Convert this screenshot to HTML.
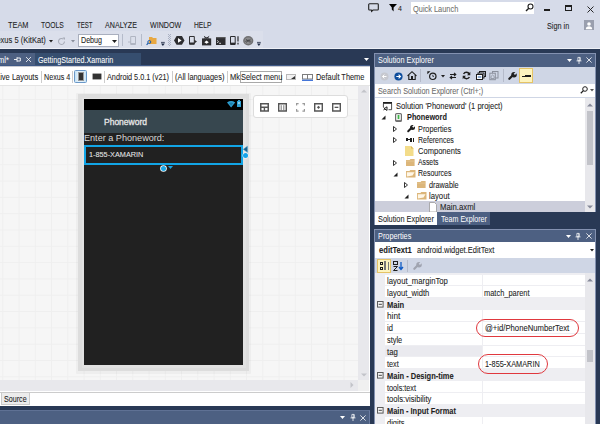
<!DOCTYPE html>
<html><head><meta charset="utf-8">
<style>
*{margin:0;padding:0;box-sizing:border-box}
html,body{width:600px;height:424px;overflow:hidden;background:#D6DBE9;position:relative;font-family:"Liberation Sans",sans-serif;color:#1E1E1E}
.a{position:absolute}
.t{position:absolute;white-space:nowrap;line-height:1;font-size:8.6px;transform:scaleX(.875);transform-origin:0 0;-webkit-text-stroke:.08px currentColor}
.b{font-weight:bold}
svg{position:absolute;overflow:visible}
</style></head><body>

<!-- ===== MENU BAR ===== -->
<div class="t" style="left:8.2px;top:20.65px;font-size:8.8px;transform:scaleX(0.840)">TEAM</div>
<div class="t" style="left:41px;top:20.65px;font-size:8.8px;transform:scaleX(0.769)">TOOLS</div>
<div class="t" style="left:76.6px;top:20.65px;font-size:8.8px;transform:scaleX(0.688)">TEST</div>
<div class="t" style="left:105.2px;top:20.65px;font-size:8.8px;transform:scaleX(0.809)">ANALYZE</div>
<div class="t" style="left:149.6px;top:20.65px;font-size:8.8px;transform:scaleX(0.811)">WINDOW</div>
<div class="t" style="left:194.2px;top:20.65px;font-size:8.8px;transform:scaleX(0.761)">HELP</div>

<!-- top-right -->
<svg style="left:368px;top:3px" width="11" height="9" viewBox="0 0 11 9"><path d="M1.5 .8h8a.8.8 0 0 1 .8.8v4.6a.8.8 0 0 1-.8.8H5L3.6 8.4 3.3 7H1.5a.8.8 0 0 1-.8-.8V1.6a.8.8 0 0 1 .8-.8z" fill="none" stroke="#1E1E1E" stroke-width="1.1"/></svg>
<svg style="left:389px;top:4px" width="8" height="8" viewBox="0 0 8 8"><path d="M0 0H8L4.6 3.6V7.6L2.8 5.6V3.6z" fill="#000"/></svg>
<div class="t" style="left:398px;top:5px;font-size:7px;color:#1E1E1E;transform:none">4</div>
<div class="a" style="left:411px;top:2px;width:123px;height:12px;background:#fff"></div>
<div class="t" style="left:412.96px;top:4.58px;color:#717171;transform:scaleX(0.862)">Quick Launch</div>
<svg style="left:525px;top:3px" width="9" height="9" viewBox="0 0 9 9"><circle cx="5.5" cy="3.5" r="2.5" fill="none" stroke="#1E1E1E" stroke-width="1.1"/><path d="M3.8 5.2L1 8" stroke="#1E1E1E" stroke-width="1.4"/></svg>
<div class="a" style="left:544px;top:9px;width:6px;height:2px;background:#1E1E1E"></div>
<div class="a" style="left:565px;top:5px;width:7px;height:6px;border:1px solid #1E1E1E;border-top-width:2px"></div>
<svg style="left:587px;top:6px" width="7" height="7" viewBox="0 0 7 7"><path d="M.5 .5l6 6M6.5 .5l-6 6" stroke="#1E1E1E" stroke-width=".95"/></svg>
<div class="t" style="left:546.96px;top:21.78px;color:#1E1E1E;transform:scaleX(0.846)">Sign in</div>
<div class="a" style="left:584px;top:20px;width:10px;height:10px;background:#9A9FAE"></div>
<svg style="left:584px;top:20px" width="10" height="10" viewBox="0 0 10 10"><circle cx="5" cy="4" r="1.8" fill="#fff"/><path d="M1.8 9.2c0-2.2 1.4-3 3.2-3s3.2.8 3.2 3z" fill="#fff"/></svg>

<!-- ===== TOOLBAR ===== -->
<div class="a" style="left:0;top:31px;width:262.5px;height:17px;background:rgba(255,255,255,.13)"></div>
<div class="t" style="left:-9.3px;top:36.18px;">Nexus 5 (KitKat)</div>
<svg style="left:49px;top:40.2px" width="4" height="2.5" viewBox="0 0 4 2.5"><path d="M0 0h4L2 2.5z" fill="#1E1E1E"/></svg>
<svg style="left:57px;top:36.5px" width="9" height="9" viewBox="0 0 9 9"><path d="M7.5 4.5a3 3 0 1 1-1-2.3" fill="none" stroke="#A8ACB8" stroke-width="1.1"/><path d="M5.5 .5h2.5v2.5z" fill="#A8ACB8"/></svg>
<svg style="left:71px;top:40px" width="4" height="3" viewBox="0 0 4 3"><path d="M0 0h4L2 2.5z" fill="#8A8F9C"/></svg>
<div class="a" style="left:78px;top:34px;width:41px;height:13px;background:#fff;border:1px solid #A9AFBE"></div>
<div class="t" style="left:80.72px;top:36.18px;;transform:scaleX(0.830)">Debug</div>
<svg style="left:112px;top:40px" width="5" height="3" viewBox="0 0 5 3"><path d="M0 0h5L2.5 3z" fill="#1E1E1E"/></svg>
<div class="a" style="left:122px;top:34px;width:1px;height:12px;background:#B5BBCA"></div>
<svg style="left:128.2px;top:36px" width="8" height="9" viewBox="0 0 8 9"><path d="M2.7 .5h4.8v8H2.7z" fill="none" stroke="#B0B5C2" stroke-width="1"/><path d="M2.7 7.6h4.8" stroke="#B0B5C2" stroke-width="1.2"/><path d="M0 6h2.7" stroke="#B0B5C2" stroke-width=".9"/></svg>
<div class="a" style="left:141px;top:34px;width:1px;height:12px;background:#B5BBCA"></div>
<svg style="left:146px;top:35.5px" width="11" height="10" viewBox="0 0 11 10"><path d="M3 1h3l1 1h3.5v6H3z" fill="#E8A842"/><circle cx="3.3" cy="6" r="1.5" fill="none" stroke="#1E5BA8" stroke-width="1"/><path d="M2.2 7.2L.6 8.8" stroke="#1E5BA8" stroke-width="1.2"/></svg>
<svg style="left:161px;top:41.7px" width="3.8" height="4" viewBox="0 0 3.8 4"><path d="M0 .4h3.8" stroke="#1E2A44" stroke-width=".8"/><path d="M0 1.6h3.8L1.9 4z" fill="#1E2A44"/></svg>
<svg style="left:168px;top:34px" width="3" height="12" viewBox="0 0 3 12" fill="#A9B0C2"><rect x="0" y="0" width="1" height="1"/><rect x="2" y="0" width="1" height="1"/><rect x="0" y="2" width="1" height="1"/><rect x="2" y="2" width="1" height="1"/><rect x="0" y="4" width="1" height="1"/><rect x="2" y="4" width="1" height="1"/><rect x="0" y="6" width="1" height="1"/><rect x="2" y="6" width="1" height="1"/><rect x="0" y="8" width="1" height="1"/><rect x="2" y="8" width="1" height="1"/><rect x="0" y="10" width="1" height="1"/><rect x="2" y="10" width="1" height="1"/><rect x="1" y="1" width="1" height="1"/><rect x="1" y="3" width="1" height="1"/><rect x="1" y="5" width="1" height="1"/><rect x="1" y="7" width="1" height="1"/><rect x="1" y="9" width="1" height="1"/><rect x="1" y="11" width="1" height="1"/></svg>
<svg style="left:174px;top:36.2px" width="10.5" height="8.8" viewBox="0 0 10.5 8.8"><path d="M2.6 0h5.3l2.6 4.4-2.6 4.4H2.6L0 4.4z" fill="#2D2D30"/><path d="M4 2.1L7.6 4.4 4 6.7z" fill="#fff"/></svg>
<svg style="left:189.2px;top:36.2px" width="8" height="8.8" viewBox="0 0 8 8.8"><path d="M.5 .5h4.8v7.8H.5z" fill="none" stroke="#2D2D30" stroke-width="1"/><path d="M.5 7.3h4.8" stroke="#2D2D30" stroke-width="1.6"/><path d="M5.3 3.8L8 5.6 5.3 7.4z" fill="#2D2D30"/></svg>
<svg style="left:202.2px;top:35.8px" width="9.2" height="9.4" viewBox="0 0 9.2 9.4"><path d="M2 .3l2.6 1.8L7.2.3" fill="none" stroke="#2D2D30" stroke-width=".9"/><path d="M4.6 1.4a3 3 0 0 1 3 1.2H1.6a3 3 0 0 1 3-1.2z" fill="#2D2D30"/><rect x="0" y="2.4" width="9.2" height="7" fill="#2D2D30"/><path d="M4.6 4.6l2.2 1.6-2.2 1.6-2.2-1.6z" fill="#fff"/></svg>
<svg style="left:216px;top:37px" width="9.5" height="8" viewBox="0 0 9.5 8"><rect x="0" y="0" width="9.5" height="8" fill="#2D2D30"/><path d="M0 .7h9.5" stroke="#8A8A8A" stroke-width=".6"/><path d="M1.2 3.4l1.3 1.2-1.3 1.4" stroke="#fff" stroke-width=".8" fill="none"/><path d="M3.2 6.3h1.8" stroke="#fff" stroke-width=".8"/></svg>
<svg style="left:230px;top:36px" width="9.5" height="9" viewBox="0 0 9.5 9"><path d="M.5 .5h4.7v8H.5z" fill="none" stroke="#2D2D30" stroke-width="1"/><path d="M.5 7.4h4.7" stroke="#2D2D30" stroke-width="1.5"/><path d="M8 .3v5.3M8 6.8v1.7" stroke="#2D2D30" stroke-width="1.2"/></svg>
<svg style="left:243px;top:36px" width="10.5" height="9.5" viewBox="0 0 10.5 9.5"><ellipse cx="5.25" cy="4.75" rx="5.1" ry="4.65" fill="#707072"/><ellipse cx="5.25" cy="4.75" rx="3.6" ry="3.2" fill="#8C8C8E"/><path d="M2.2 5.5q3-3 6 0M2.8 3.2l4.6 3.3M7.6 3.2L3 6.5" stroke="#3E3E40" stroke-width=".7" fill="none"/></svg>
<svg style="left:257.3px;top:41.7px" width="3.8" height="4" viewBox="0 0 3.8 4"><path d="M0 .4h3.8" stroke="#1E2A44" stroke-width=".8"/><path d="M0 1.6h3.8L1.9 4z" fill="#1E2A44"/></svg>
<div class="a" style="left:0;top:48px;width:600px;height:1px;background:#EEF0F6"></div>

<!-- ===== DOC WELL ===== -->
<div class="a" style="left:0;top:49px;width:600px;height:375px;background:#293955"></div>
<div class="a" style="left:0;top:53px;width:35px;height:12px;background:#4D6082"></div>
<div class="a" style="left:35px;top:53px;width:106px;height:12px;background:#364E6F"></div>
<div class="t" style="left:-2.5px;top:55.58px;color:#fff;-webkit-text-stroke:0">ml*</div>
<svg style="left:14px;top:57px" width="7" height="5" viewBox="0 0 7 5"><path d="M0 2.5h3M3 .3v4.4M3 1h3.3v3H3" fill="none" stroke="#fff" stroke-width=".9"/></svg>
<svg style="left:26.3px;top:57px" width="5" height="5" viewBox="0 0 5 5"><path d="M0 0l5 5M5 0L0 5" stroke="#fff" stroke-width=".8"/></svg>
<div class="t" style="left:37.96px;top:55.58px;color:#fff;-webkit-text-stroke:.05px #fff;transform:scaleX(0.838)">GettingStarted.Xamarin</div>
<svg style="left:364px;top:58px" width="5" height="3" viewBox="0 0 5 3"><path d="M0 0h5L2.5 3z" fill="#fff"/></svg>

<!-- designer -->
<div class="a" style="left:0;top:65px;width:370px;height:1px;background:#3F5986"></div>
<div class="a" style="left:0;top:66px;width:370px;height:340px;background:#fff;border-top:1px solid #C9CBD2"></div>
<div class="a" style="left:0;top:85px;width:370px;height:1px;background:#E4E4E4"></div>
<div class="a" style="left:0;top:86px;width:358px;height:294px;background-color:#F6F6F6;background-image:linear-gradient(90deg,#EFEFEF 1px,transparent 1px),linear-gradient(#EFEFEF 1px,transparent 1px);background-size:16.26px 16.32px;background-position:2.3px 13px"></div>
<div class="a" style="left:358px;top:86px;width:10.5px;height:294px;background:#E8E8EC"></div>
<div class="a" style="left:0;top:380px;width:358px;height:10.5px;background:#E8E8EC"></div>
<svg style="left:361px;top:89px" width="6" height="4" viewBox="0 0 6 4"><path d="M0 3.5L3 .5l3 3z" fill="#C2C3C9"/></svg>
<svg style="left:360.5px;top:373px" width="6" height="4" viewBox="0 0 6 4"><path d="M0 .5h6L3 3.5z" fill="#C2C3C9"/></svg>
<svg style="left:350px;top:382px" width="4" height="6" viewBox="0 0 4 6"><path d="M.5 0v6L3.5 3z" fill="#C2C3C9"/></svg>
<div class="a" style="left:358px;top:380px;width:10.5px;height:10.5px;background:#F0F0F0"></div>
<div class="a" style="left:0;top:392px;width:370px;height:1px;background:#CCCCCC"></div>

<div class="t" style="left:-4.5px;top:73.18px;">Live Layouts</div>
<div class="a" style="left:41px;top:71px;width:1px;height:12px;background:#CCCCCC"></div>
<div class="t" style="left:43.72px;top:73.18px;;transform:scaleX(0.833)">Nexus 4</div>
<div class="a" style="left:72px;top:71px;width:1px;height:12px;background:#CCCCCC"></div>
<div class="a" style="left:74px;top:70px;width:13px;height:13px;background:linear-gradient(90deg,#C4E2F6,#E4F2FB 30%,#E4F2FB 70%,#C4E2F6);border:1px solid #6A98C8;border-radius:1.5px"></div>
<div class="a" style="left:78px;top:72.3px;width:6.3px;height:9px;background:#333;border:1px solid #9A9A9A"></div>
<div class="a" style="left:92px;top:73.3px;width:9.7px;height:7px;background:#333;border:1px solid #A8A8A8;border-radius:1.5px"></div>
<div class="a" style="left:104px;top:71px;width:1px;height:12px;background:#CCCCCC"></div>
<div class="t" style="left:107.30px;top:73.18px;;transform:scaleX(0.847)">Android 5.0.1 (v21)</div>
<div class="a" style="left:172px;top:71px;width:1px;height:12px;background:#CCCCCC"></div>
<div class="t" style="left:174.87px;top:73.18px;;transform:scaleX(0.861)">(All languages)</div>
<div class="a" style="left:227px;top:71px;width:1px;height:12px;background:#CCCCCC"></div>
<div class="t" style="left:230px;top:73.18px;">Mk</div>
<div class="a" style="left:239.5px;top:71.3px;width:42.8px;height:11.7px;background:#fff;border:1px solid #A8A8A8"></div>
<div class="t" style="left:240.95px;top:73.18px;;transform:scaleX(0.865)">Select menu</div>
<div class="a" style="left:286px;top:74px;width:10px;height:6px;background:#F2F2F2;border:1px solid #B8B8B8"></div>
<svg style="left:291px;top:76px" width="4" height="3" viewBox="0 0 4 3"><path d="M4 0v3H0z" fill="#333"/></svg>
<svg style="left:302px;top:73.5px" width="11" height="7" viewBox="0 0 11 7"><rect x=".5" y=".5" width="10" height="4.5" fill="#fff" stroke="#7D7D7D"/><path d="M5.5 .5v4.5" stroke="#7D7D7D"/><path d="M0 6.3h11" stroke="#3B6FD6" stroke-width="1.3"/></svg>
<div class="t" style="left:315.70px;top:73.18px;;transform:scaleX(0.861)">Default Theme</div>

<!-- device -->
<div class="a" style="left:76px;top:93px;width:175px;height:281px;background:rgba(0,0,0,.03);border-radius:1px"></div>
<div class="a" style="left:78px;top:94px;width:171px;height:277px;background:#DDDDDD"></div>
<div class="a" style="left:81.5px;top:97.5px;width:164px;height:270px;background:#E2E2E2"></div>

<div class="a" style="left:84px;top:99px;width:159px;height:266px;background:#212121"></div>
<div class="a" style="left:84px;top:99px;width:159px;height:11px;background:#000"></div>
<svg style="left:227.3px;top:100.6px" width="8.2" height="6.4" viewBox="0 0 8.2 6.4"><path d="M0 1.4Q4.1-1.4 8.2 1.4L4.1 6.4z" fill="#2E9FD2"/><path d="M2 2.2Q4.1 1 6.2 2.2L4.1 4.8z" fill="#1F7FAA"/></svg>
<div class="a" style="left:237.2px;top:100.8px;width:4px;height:6.4px;background:#2E9FD2"></div>
<div class="a" style="left:238.2px;top:100px;width:2px;height:1px;background:#2E9FD2"></div>
<div class="a" style="left:238.2px;top:102px;width:2px;height:2px;background:#8FD0EA"></div>
<div class="a" style="left:84px;top:110px;width:159px;height:23px;background:#37474F"></div>
<div class="t" style="left:104px;top:117.5px;color:#E6E6E6;font-size:8.5px;-webkit-text-stroke:.3px #E6E6E6;transform:none">Phoneword</div>
<div class="t" style="left:84px;top:133.8px;color:#D8D8D8;font-size:9.1px;-webkit-text-stroke:0;transform:none">Enter a Phoneword:</div>
<div class="a" style="left:84.3px;top:144.6px;width:158.7px;height:20.4px;border:2px solid #12A5E6"></div>
<div class="t" style="left:89px;top:151.2px;color:#E8E8E8;font-size:7.3px;-webkit-text-stroke:.05px #E8E8E8;transform:none">1-855-XAMARIN</div>
<div class="a" style="left:160.5px;top:165.5px;width:5px;height:5px;border-radius:50%;background:#1AA6E4;box-shadow:0 0 0 .8px #fff"></div>
<svg style="left:167.5px;top:166px" width="5" height="3" viewBox="0 0 5 3"><path d="M0 0h5L2.5 3z" fill="#1AA6E4"/></svg>
<svg style="left:243px;top:145.8px" width="4.6" height="6.6" viewBox="0 0 4.6 6.6"><path d="M4.4 .3v6L.3 3.3z" fill="#1F5E86" stroke="#2A9AD0" stroke-width=".5"/></svg>
<div class="a" style="left:243.3px;top:152.5px;width:5px;height:5px;border-radius:50%;background:#15A3EA;box-shadow:0 0 0 .6px rgba(255,255,255,.7)"></div>

<!-- floating toolbar -->
<div class="a" style="left:253px;top:95px;width:95px;height:23px;background:#fff;border:1px solid #DDDDDD;border-radius:3px"></div>
<svg style="left:260px;top:102.6px" width="9" height="8.7" viewBox="0 0 9 8.7"><path d="M0 0h9v8.7H0z M1.5 1.5v2h6v-2z M1.5 5v2.2h2.2V5z M5.1 5v2.2h2.4V5z" fill="#555" fill-rule="evenodd"/></svg>
<svg style="left:278px;top:102.6px" width="9" height="8.7" viewBox="0 0 9 8.7"><path d="M0 0h9v8.7H0z M1.4 1.4v5.9h6.2V1.4z" fill="#555" fill-rule="evenodd"/><path d="M3.2 2.2v5M5.8 2.2v5" stroke="#555" stroke-width=".8"/></svg>
<svg style="left:296px;top:102.6px" width="9" height="8.7" viewBox="0 0 9 8.7"><path d="M.6 2.6V.6h2M6.4 .6h2v2M8.4 6.1v2h-2M2.6 8.1h-2v-2" fill="none" stroke="#9A9A9A" stroke-width="1.2"/></svg>
<svg style="left:314px;top:102.6px" width="9" height="8.7" viewBox="0 0 9 8.7"><path d="M0 0h9v8.7H0z M1.4 1.4v5.9h6.2V1.4z" fill="#555" fill-rule="evenodd"/><path d="M4.5 2.8l1.6 1.55-1.6 1.55-1.6-1.55z" fill="#555"/></svg>
<svg style="left:332px;top:102.6px" width="9" height="8.7" viewBox="0 0 9 8.7"><path d="M0 0h9v8.7H0z M1.4 1.4v5.9h6.2V1.4z" fill="#555" fill-rule="evenodd"/><path d="M2.6 4.35h3.8" stroke="#555" stroke-width="1.3"/></svg>

<!-- source -->
<div class="a" style="left:1px;top:392px;width:29px;height:13px;background:#ECECEC;border:1px solid #CACACA"></div>
<div class="t" style="left:3.8px;top:394.6px;font-size:8.6px;transform:scaleX(.83)">Source</div>

<!-- bottom panel caption -->
<div class="a" style="left:0;top:409.6px;width:370px;height:14.4px;background:#4D6082;border-top:1px solid #5F7194;border-right:1px solid #6A7BA0"></div>
<svg style="left:340px;top:416px" width="5" height="3" viewBox="0 0 5 3"><path d="M0 0h5L2.5 3z" fill="#fff"/></svg>
<svg style="left:350px;top:414px" width="6" height="7" viewBox="0 0 6 7"><path d="M1.9 .4h2.2v3.3H1.9zM.5 3.9h5M3 3.9V7" fill="none" stroke="#fff" stroke-width=".75"/><path d="M3.9 .4v3.3" stroke="#fff" stroke-width=".7"/></svg>
<svg style="left:360px;top:414.5px" width="6" height="6" viewBox="0 0 6 6"><path d="M.4 .4l5.2 5.2M5.6 .4L.4 5.6" stroke="#fff" stroke-width=".8"/></svg>

<!-- ===== SOLUTION EXPLORER ===== -->
<div class="a" style="left:374px;top:53px;width:222px;height:172px;background:#fff;border:1px solid #8391B0;border-top:none"></div>
<div class="a" style="left:374px;top:53px;width:222px;height:14px;background:#4D6082;border:1px solid #8391B0;border-bottom:none"></div>
<div class="t" style="left:377.96px;top:56.18px;color:#fff;-webkit-text-stroke:0;transform:scaleX(0.854)">Solution Explorer</div>
<svg style="left:567px;top:59px" width="5" height="3" viewBox="0 0 5 3"><path d="M0 0h5L2.5 3z" fill="#fff"/></svg>
<svg style="left:576px;top:56.5px" width="6" height="7" viewBox="0 0 6 7"><path d="M1.9 .4h2.2v3.3H1.9zM.5 3.9h5M3 3.9V7" fill="none" stroke="#fff" stroke-width=".75"/><path d="M3.9 .4v3.3" stroke="#fff" stroke-width=".7"/></svg>
<svg style="left:586px;top:57px" width="6" height="6" viewBox="0 0 6 6"><path d="M.4 .4l5.2 5.2M5.6 .4L.4 5.6" stroke="#fff" stroke-width=".8"/></svg>
<div class="a" style="left:375px;top:67px;width:220px;height:17px;background:#CFD6E5"></div>
<svg style="left:380px;top:71.5px" width="9" height="9" viewBox="0 0 9 9"><circle cx="4.5" cy="4.5" r="4" fill="#C6C8CF"/><path d="M6.5 4.5h-4M4.3 2.6L2.5 4.5l1.8 1.9" fill="none" stroke="#fff" stroke-width="1"/></svg>
<svg style="left:394px;top:71.5px" width="9" height="9" viewBox="0 0 9 9"><circle cx="4.5" cy="4.5" r="4.1" fill="#0E4D9C"/><path d="M2.3 4.5h4.2M4.6 2.6l1.9 1.9-1.9 1.9" fill="none" stroke="#fff" stroke-width="1.1"/></svg>
<svg style="left:407px;top:71px" width="10" height="9" viewBox="0 0 10 9"><path d="M.5 4.8L5 .7l4.5 4.1M1.8 3.8v4.7h6.4V3.8" fill="none" stroke="#1E1E1E" stroke-width="1.1"/><rect x="4" y="5" width="2" height="3.5" fill="#1E1E1E"/></svg>
<div class="a" style="left:420px;top:69px;width:1px;height:13px;background:#B5BBCA"></div>
<svg style="left:427px;top:70.5px" width="10" height="9" viewBox="0 0 10 9"><circle cx="5.8" cy="5.3" r="3.2" fill="none" stroke="#1E1E1E" stroke-width="1.2"/><path d="M5.8 3.8v1.6h1.2" fill="none" stroke="#1E1E1E" stroke-width=".8"/><path d="M.3 .3h3.2L.3 3.3z" fill="#1E1E1E"/></svg>
<svg style="left:441px;top:75px" width="4" height="3" viewBox="0 0 4 3"><path d="M0 0h4L2 2.5z" fill="#1E1E1E"/></svg>
<svg style="left:449px;top:71.5px" width="8" height="8" viewBox="0 0 8 8"><path d="M1 2.5h5.5M5 .8l1.8 1.7L5 4.2M7 5.5H1.5M3 3.8L1.2 5.5 3 7.2" fill="none" stroke="#1E1E1E" stroke-width="1.1"/></svg>
<svg style="left:462px;top:71px" width="9" height="9" viewBox="0 0 9 9"><path d="M7.3 3.2A3.2 3.2 0 0 0 1.6 3M1.7 5.8a3.2 3.2 0 0 0 5.7.2" fill="none" stroke="#1E1E1E" stroke-width="1.5"/><path d="M8.3.8v3.4H5z M.7 8.2V4.8H4z" fill="#1E1E1E"/></svg>
<svg style="left:475.5px;top:70.8px" width="10" height="9" viewBox="0 0 10 9"><rect x="3.5" y=".5" width="6" height="5" fill="#CFD6E5" stroke="#1E1E1E"/><rect x="2" y="2" width="6" height="5" fill="#CFD6E5" stroke="#1E1E1E"/><rect x=".5" y="3.5" width="6" height="5" fill="#fff" stroke="#1E1E1E"/><path d="M1.8 6h3.5" stroke="#1E5BA8" stroke-width="1"/></svg>
<svg style="left:489px;top:71px" width="10" height="9" viewBox="0 0 10 9"><rect x="3.5" y=".5" width="5.5" height="6.5" fill="none" stroke="#8A8F9C"/><rect x=".8" y="2.2" width="5.5" height="6.5" fill="#CFD6E5" stroke="#8A8F9C"/><path d="M2 5.5l1.6-1.5 1.6 1.5v2H2z" fill="none" stroke="#8A8F9C" stroke-width=".8"/></svg>
<div class="a" style="left:503px;top:69px;width:1px;height:13px;background:#B5BBCA"></div>
<svg style="left:508px;top:71.5px" width="8.8" height="7.7" viewBox="0 0 8 7"><path d="M1.2 6.2L4.4 3" stroke="#1E1E1E" stroke-width="2" stroke-linecap="round"/><circle cx="5.5" cy="2.4" r="2.5" fill="#1E1E1E"/><path d="M5.2 1.6L7.3-.5l1.2 1.2L6.3 2.8z" fill="#CFD6E5"/></svg>
<div class="a" style="left:519px;top:68px;width:14px;height:15px;background:#FDF4BF;border:1px solid #E5C365"></div>
<div class="a" style="left:522px;top:76px;width:3px;height:1px;background:#1E1E1E"></div>
<div class="a" style="left:525px;top:75px;width:5.5px;height:2px;background:#1E1E1E"></div>
<div class="a" style="left:375px;top:84px;width:220px;height:13px;background:#fff"></div>
<div class="t" style="left:377.96px;top:86.88px;color:#6D6D6D;transform:scaleX(0.849)">Search Solution Explorer (Ctrl+;)</div>
<svg style="left:580px;top:86px" width="8" height="8" viewBox="0 0 8 8"><circle cx="5" cy="3" r="2.3" fill="none" stroke="#1E1E1E" stroke-width="1"/><path d="M3.4 4.6L.8 7.2" stroke="#1E1E1E" stroke-width="1.3"/></svg>
<svg style="left:590px;top:89px" width="4" height="3" viewBox="0 0 4 3"><path d="M0 0h4L2 2.5z" fill="#555"/></svg>
<div class="a" style="left:375px;top:97px;width:220px;height:1px;background:#CFD6E5"></div>

<!-- tree -->
<svg style="left:383px;top:102.0px" width="9" height="9" viewBox="0 0 9 9"><path d="M0 .9h9" stroke="#1E1E1E" stroke-width="1.8"/><path d="M.4 1.5V5M8.6 1.5V7.7H5.5" fill="none" stroke="#1E1E1E" stroke-width=".8"/><path d="M.5 5.5l1.5 1.2L.5 7.9M1.2 6.7L4 4.8V8.4L1.2 6.7" fill="none" stroke="#1E1E1E" stroke-width="1"/></svg>
<div class="t" style="left:395.55px;top:102.18px;;transform:scaleX(0.879)">Solution 'Phoneword' (1 project)</div>
<svg style="left:381.2px;top:115.2px" width="5" height="5" viewBox="0 0 5 5"><path d="M4.5 .5v4h-4z" fill="#1E1E1E"/></svg>
<svg style="left:395px;top:113.2px" width="7" height="9" viewBox="0 0 7 9"><rect x=".6" y=".6" width="5.8" height="7.8" rx="1" fill="#fff" stroke="#707070" stroke-width="1.2"/><rect x="2.6" y="2" width="1.8" height="4" fill="#3FB54A"/><path d="M1 7.4h5" stroke="#707070" stroke-width="1"/></svg>
<div class="t b" style="left:406.79px;top:113.38px;;transform:scaleX(0.853)">Phoneword</div>
<svg style="left:392.8px;top:126px" width="4" height="6" viewBox="0 0 4 6"><path d="M.5 .5v5L3.5 3z" fill="none" stroke="#1E1E1E" stroke-width=".9"/></svg>
<svg style="left:406.5px;top:124.9px" width="8.0" height="7.0" viewBox="0 0 8 7"><path d="M1.2 6.2L4.4 3" stroke="#1E1E1E" stroke-width="2" stroke-linecap="round"/><circle cx="5.5" cy="2.4" r="2.5" fill="#1E1E1E"/><path d="M5.2 1.6L7.3-.5l1.2 1.2L6.3 2.8z" fill="#fff"/></svg>
<div class="t" style="left:417.70px;top:124.58px;;transform:scaleX(0.851)">Properties</div>
<svg style="left:392.8px;top:137.4px" width="4" height="6" viewBox="0 0 4 6"><path d="M.5 .5v5L3.5 3z" fill="none" stroke="#1E1E1E" stroke-width=".9"/></svg>
<div class="a" style="left:405.8px;top:138.4px;width:2.2px;height:2.5px;background:#1E1E1E"></div>
<div class="a" style="left:408px;top:139.3px;width:2px;height:.8px;background:#1E1E1E"></div>
<div class="a" style="left:410px;top:137.7px;width:4.4px;height:4px;background:#1E1E1E"></div>
<div class="a" style="left:411.8px;top:137.7px;width:.8px;height:4px;background:#fff"></div>
<div class="t" style="left:417.73px;top:135.78px;;transform:scaleX(0.814)">References</div>
<svg style="left:404.5px;top:146.3px" width="9" height="10" viewBox="0 0 9 10"><path d="M0 0h6l2.5 2.5V10H0z" fill="#F3DC8A"/><path d="M6 0v2.5h2.5" fill="#D9B95A"/></svg>
<div class="t" style="left:417.95px;top:146.98px;;transform:scaleX(0.879)">Components</div>
<svg style="left:392.8px;top:159.5px" width="4" height="6" viewBox="0 0 4 6"><path d="M.5 .5v5L3.5 3z" fill="none" stroke="#1E1E1E" stroke-width=".9"/></svg>
<svg style="left:405.8px;top:158.5px" width="8.6" height="7" viewBox="0 0 8.6 7"><path d="M0 .9h3.6l.9-.9h4.1v7H0z" fill="#DCB67A"/><path d="M0 2.1h8.6" stroke="#E8CC9C" stroke-width=".6"/></svg>
<div class="t" style="left:418.30px;top:158.18px;;transform:scaleX(0.792)">Assets</div>
<svg style="left:392.5px;top:171.6px" width="5" height="5" viewBox="0 0 5 5"><path d="M4.5 .5v4h-4z" fill="#1E1E1E"/></svg>
<svg style="left:405.5px;top:169.7px" width="9.5" height="7.4" viewBox="0 0 9.5 7.4"><path d="M0 .9h3.4l.9-.9h5.2v7.4H0z" fill="#DCB67A"/><path d="M.9 2.2h7.6L6.6 5.6.9 6.4z" fill="#FFF7E8"/></svg>
<div class="t" style="left:417.73px;top:169.38px;;transform:scaleX(0.813)">Resources</div>
<svg style="left:403.8px;top:181.9px" width="4" height="6" viewBox="0 0 4 6"><path d="M.5 .5v5L3.5 3z" fill="none" stroke="#1E1E1E" stroke-width=".9"/></svg>
<svg style="left:417.2px;top:181.3px" width="8.6" height="7" viewBox="0 0 8.6 7"><path d="M0 .9h3.6l.9-.9h4.1v7H0z" fill="#DCB67A"/><path d="M0 2.1h8.6" stroke="#E8CC9C" stroke-width=".6"/></svg>
<div class="t" style="left:429.36px;top:180.58px;;transform:scaleX(0.850)">drawable</div>
<svg style="left:404px;top:193.6px" width="5" height="5" viewBox="0 0 5 5"><path d="M4.5 .5v4h-4z" fill="#1E1E1E"/></svg>
<svg style="left:416.8px;top:192.4px" width="9.5" height="7.4" viewBox="0 0 9.5 7.4"><path d="M0 .9h3.4l.9-.9h5.2v7.4H0z" fill="#DCB67A"/><path d="M.9 2.2h7.6L6.6 5.6.9 6.4z" fill="#FFF7E8"/></svg>
<div class="t" style="left:429.16px;top:191.78px;;transform:scaleX(0.897)">layout</div>
<div class="a" style="left:375px;top:201.2px;width:210px;height:10.6px;background:#CCCEDB"></div>
<svg style="left:428.5px;top:202.4px" width="8" height="10" viewBox="0 0 8 10"><path d="M.5 .5h5l2 2V10H.5z" fill="#fff" stroke="#9A9A9A" stroke-width=".8"/></svg>
<div class="t" style="left:439.87px;top:202.98px;;transform:scaleX(0.902)">Main.axml</div>
<!-- tree scrollbar -->
<div class="a" style="left:585px;top:98px;width:10px;height:114px;background:#E8E8EC"></div>
<svg style="left:587px;top:103px" width="6" height="4" viewBox="0 0 6 4"><path d="M0 3.5L3 .5l3 3z" fill="#868999"/></svg>
<div class="a" style="left:587px;top:110.5px;width:6px;height:54.5px;background:#C2C3C9"></div>
<svg style="left:587px;top:205px" width="6" height="4" viewBox="0 0 6 4"><path d="M0 .5h6L3 3.5z" fill="#868999"/></svg>

<!-- tabs -->
<div class="a" style="left:374px;top:212px;width:226px;height:13px;background:#293955"></div>
<div class="a" style="left:374px;top:212px;width:1px;height:13px;background:#8391B0"></div>
<div class="a" style="left:375px;top:212px;width:62px;height:13px;background:#fff"></div>
<div class="t" style="left:377.96px;top:214.58px;;transform:scaleX(0.854)">Solution Explorer</div>
<div class="a" style="left:437px;top:212px;width:53px;height:13px;background:#4D6082"></div>
<div class="t" style="left:441.13px;top:214.58px;color:#fff;-webkit-text-stroke:0;transform:scaleX(0.828)">Team Explorer</div>
<div class="a" style="left:374px;top:225px;width:226px;height:4px;background:#293955"></div>

<!-- ===== PROPERTIES ===== -->
<div class="a" style="left:374px;top:229px;width:222px;height:195px;background:#fff;border:1px solid #8391B0;border-top:none"></div>
<div class="a" style="left:374px;top:229px;width:222px;height:13px;background:#4D6082;border:1px solid #8391B0;border-bottom:none"></div>
<div class="t" style="left:377.70px;top:232.18px;color:#fff;-webkit-text-stroke:0;transform:scaleX(0.851)">Properties</div>
<svg style="left:566px;top:234.5px" width="5" height="3" viewBox="0 0 5 3"><path d="M0 0h5L2.5 3z" fill="#fff"/></svg>
<svg style="left:575px;top:232.5px" width="6" height="7" viewBox="0 0 6 7"><path d="M1.9 .4h2.2v3.3H1.9zM.5 3.9h5M3 3.9V7" fill="none" stroke="#fff" stroke-width=".75"/><path d="M3.9 .4v3.3" stroke="#fff" stroke-width=".7"/></svg>
<svg style="left:585.5px;top:233px" width="6" height="6" viewBox="0 0 6 6"><path d="M.4 .4l5.2 5.2M5.6 .4L.4 5.6" stroke="#fff" stroke-width=".8"/></svg>
<div class="t b" style="left:379.03px;top:246.18px;;transform:scaleX(0.885)">editText1</div>
<div class="t" style="left:416.95px;top:246.18px;;transform:scaleX(0.871)">android.widget.EditText</div>
<svg style="left:589.5px;top:249px" width="4" height="3" viewBox="0 0 4 3"><path d="M0 0h4L2 2.5z" fill="#1E1E1E"/></svg>
<div class="a" style="left:375px;top:258px;width:220px;height:15px;background:#CFD6E5"></div>
<div class="a" style="left:377px;top:259px;width:14px;height:14px;background:#FDF4BF;border:1px solid #E5C365"></div>
<div class="a" style="left:379.5px;top:261.5px;width:3px;height:3px;border:1px solid #1E1E1E"></div>
<div class="a" style="left:379.5px;top:266.5px;width:3px;height:3px;border:1px solid #1E1E1E"></div>
<div class="a" style="left:384px;top:261px;width:2px;height:9px;background:#777"></div>
<div class="a" style="left:387.5px;top:262px;width:1px;height:8px;background:#777"></div>
<svg style="left:393px;top:261px" width="11" height="10" viewBox="0 0 11 10"><rect x=".5" y=".5" width="4" height="3" fill="none" stroke="#1E1E1E"/><path d="M.5 5.5h4l-4 4h4" fill="none" stroke="#1E1E1E"/><path d="M8 1v7M6 6l2 2.5L10 6" fill="none" stroke="#0E5AC4" stroke-width="1.3"/></svg>
<div class="a" style="left:407px;top:260px;width:1px;height:12px;background:#B5BBCA"></div>
<svg style="left:412.5px;top:262px" width="8.8" height="7.7" viewBox="0 0 8 7"><path d="M1.2 6.2L4.4 3" stroke="#A0A4B0" stroke-width="2" stroke-linecap="round"/><circle cx="5.5" cy="2.4" r="2.5" fill="#A0A4B0"/><path d="M5.2 1.6L7.3-.5l1.2 1.2L6.3 2.8z" fill="#CFD6E5"/></svg>

<!-- grid -->
<div class="a" style="left:375px;top:273px;width:210px;height:151px;background:#EEEEF2"></div>
<div class="a" style="left:385px;top:274.60px;width:97px;height:10.84px;background:#fff"></div>
<div class="a" style="left:483px;top:274.60px;width:102px;height:10.84px;background:#fff"></div>
<div class="t" style="left:386.66px;top:276.98px;;transform:scaleX(0.897)">layout_marginTop</div>
<div class="a" style="left:385px;top:286.44px;width:97px;height:10.84px;background:#fff"></div>
<div class="a" style="left:483px;top:286.44px;width:102px;height:10.84px;background:#fff"></div>
<div class="t" style="left:386.67px;top:288.78px;;transform:scaleX(0.884)">layout_width</div>
<div class="t" style="left:484.28px;top:288.78px;;transform:scaleX(0.867)">match_parent</div>
<svg style="left:376.6px;top:300.9px" width="6.6" height="6.6" viewBox="0 0 6.6 6.6"><rect x=".5" y=".5" width="5.6" height="5.6" fill="#F4F4F4" stroke="#5A5A5A" stroke-width="1"/><path d="M1.7 3.3h3.2" stroke="#333" stroke-width=".9"/></svg>
<div class="t b" style="left:386.67px;top:300.68px;;transform:scaleX(0.880)">Main</div>
<div class="a" style="left:385px;top:310.12px;width:97px;height:10.84px;background:#fff"></div>
<div class="a" style="left:483px;top:310.12px;width:102px;height:10.84px;background:#fff"></div>
<div class="t" style="left:386.63px;top:312.48px;;transform:scaleX(0.955)">hint</div>
<div class="a" style="left:385px;top:321.96px;width:97px;height:10.84px;background:#fff"></div>
<div class="a" style="left:483px;top:321.96px;width:102px;height:10.84px;background:#fff"></div>
<div class="t" style="left:387px;top:324.38px;">id</div>
<div class="t" style="left:484.57px;top:324.38px;;transform:scaleX(0.896)">@+id/PhoneNumberText</div>
<div class="a" style="left:385px;top:333.80px;width:97px;height:10.84px;background:#fff"></div>
<div class="a" style="left:483px;top:333.80px;width:102px;height:10.84px;background:#fff"></div>
<div class="t" style="left:386.94px;top:336.18px;;transform:scaleX(0.859)">style</div>
<div class="a" style="left:385px;top:345.64px;width:97px;height:10.84px;background:#EAEAEF"></div>
<div class="a" style="left:483px;top:345.64px;width:102px;height:10.84px;background:#fff"></div>
<div class="t" style="left:387.11px;top:347.98px;;transform:scaleX(0.903)">tag</div>
<div class="a" style="left:385px;top:357.48px;width:97px;height:10.84px;background:#fff"></div>
<div class="a" style="left:483px;top:357.48px;width:102px;height:10.84px;background:#fff"></div>
<div class="t" style="left:387.12px;top:359.88px;;transform:scaleX(0.847)">text</div>
<div class="t" style="left:484.60px;top:359.88px;;transform:scaleX(0.856)">1-855-XAMARIN</div>
<svg style="left:376.6px;top:371.9px" width="6.6" height="6.6" viewBox="0 0 6.6 6.6"><rect x=".5" y=".5" width="5.6" height="5.6" fill="#F4F4F4" stroke="#5A5A5A" stroke-width="1"/><path d="M1.7 3.3h3.2" stroke="#333" stroke-width=".9"/></svg>
<div class="t b" style="left:386.68px;top:371.68px;;transform:scaleX(0.872)">Main - Design-time</div>
<div class="a" style="left:385px;top:381.16px;width:97px;height:10.84px;background:#fff"></div>
<div class="a" style="left:483px;top:381.16px;width:102px;height:10.84px;background:#fff"></div>
<div class="t" style="left:387.12px;top:383.58px;;transform:scaleX(0.843)">tools:text</div>
<div class="a" style="left:385px;top:393.00px;width:97px;height:10.84px;background:#fff"></div>
<div class="a" style="left:483px;top:393.00px;width:102px;height:10.84px;background:#fff"></div>
<div class="t" style="left:387.11px;top:395.38px;;transform:scaleX(0.886)">tools:visibility</div>
<svg style="left:376.6px;top:407.4px" width="6.6" height="6.6" viewBox="0 0 6.6 6.6"><rect x=".5" y=".5" width="5.6" height="5.6" fill="#F4F4F4" stroke="#5A5A5A" stroke-width="1"/><path d="M1.7 3.3h3.2" stroke="#333" stroke-width=".9"/></svg>
<div class="t b" style="left:386.68px;top:407.18px;;transform:scaleX(0.865)">Main - Input Format</div>
<div class="a" style="left:385px;top:416.68px;width:97px;height:10.84px;background:#fff"></div>
<div class="a" style="left:483px;top:416.68px;width:102px;height:10.84px;background:#fff"></div>
<div class="t" style="left:387px;top:419.08px;">digits</div>
<!-- prop scrollbar -->
<div class="a" style="left:585px;top:273px;width:10px;height:151px;background:#E8E8EC"></div>
<svg style="left:587px;top:278px" width="6" height="4" viewBox="0 0 6 4"><path d="M0 3.5L3 .5l3 3z" fill="#868999"/></svg>
<div class="a" style="left:587px;top:350px;width:6px;height:12px;background:#C2C3C9"></div>
<!-- red ellipses -->
<div class="a" style="left:476px;top:319px;width:103px;height:18px;border:1.3px solid #E0383E;border-radius:9px"></div>
<div class="a" style="left:478px;top:354px;width:69.5px;height:19.5px;border:1.3px solid #E0383E;border-radius:10px"></div>

</body></html>
